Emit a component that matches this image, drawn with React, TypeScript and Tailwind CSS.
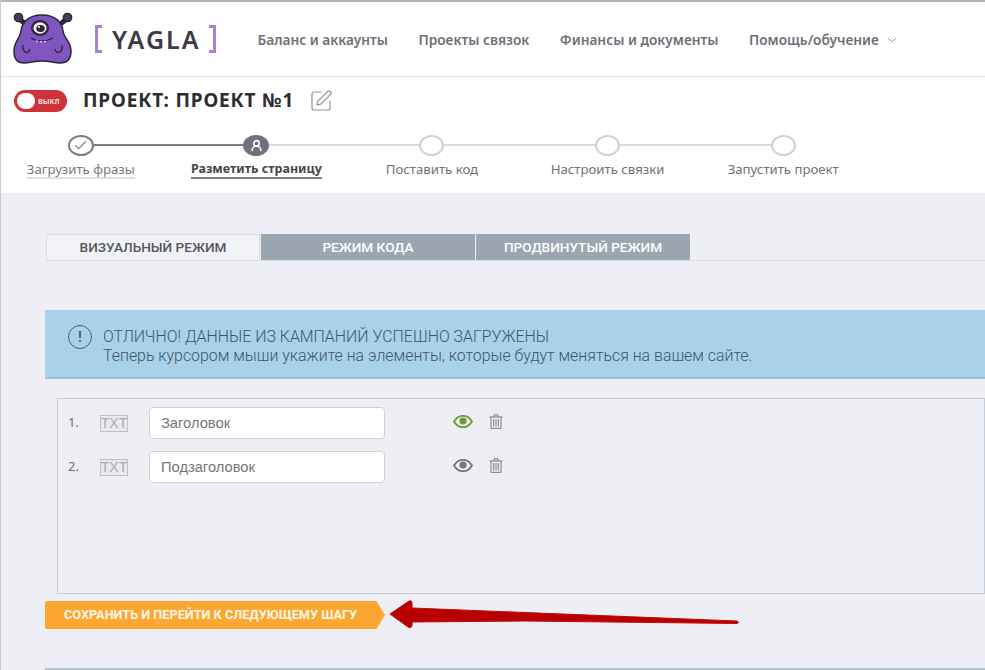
import React from "react";
import { ChevronDown, Check, UserRound, SquarePen } from "lucide-react";

const sans = "font-['Noto_Sans','Open_Sans',sans-serif]";

const steps = [
  { label: "Загрузить фразы", state: "done" },
  { label: "Разметить страницу", state: "active" },
  { label: "Поставить код", state: "todo" },
  { label: "Настроить связки", state: "todo" },
  { label: "Запустить проект", state: "todo" },
];

function Monster() {
  return (
    <svg width="60" height="54" viewBox="0 0 60 54" className="shrink-0">
      <path d="M5 6 L14 13 M55 6 L46 13" stroke="#2b2533" strokeWidth="5" />
      <circle cx="5.5" cy="5.5" r="4.2" fill="#4a3a5c" stroke="#2b2533" strokeWidth="1.3" />
      <circle cx="54.5" cy="5.5" r="4.2" fill="#4a3a5c" stroke="#2b2533" strokeWidth="1.3" />
      <path
        d="M29 3 C16 3 9 10 8 19 C7 27 1 29 1 39 C1 47 5 51 11 51 C17 51 21 49 29 49 C37 49 41 51 47 51 C54 51 58 47 58 39 C58 29 51 27 50 19 C49 10 42 3 29 3 Z"
        fill="#7f55c0"
        stroke="#2b2533"
        strokeWidth="1.5"
      />
      <ellipse cx="27" cy="16" rx="9" ry="8" fill="#2f2838" />
      <ellipse cx="27" cy="16" rx="6.6" ry="5.8" fill="#f4f1f7" />
      <ellipse cx="27.5" cy="16.5" rx="4.2" ry="3.6" fill="#2f2838" />
      <circle cx="26" cy="15" r="1" fill="#fff" />
      <path d="M18 26 C24 30 33 30 40 26" fill="none" stroke="#2b2533" strokeWidth="1.2" />
      <path d="M23 28.5 l1 1.6 l1-1.2 M27 29.2 l1 1.4 l1-1.4 M31 29 l1 1.4 l1-1.6" fill="#e8e2f0" stroke="#e8e2f0" strokeWidth="0.7" />
      <path d="M10 33 C9 41 16 43 17 37 M49 33 C50 41 43 43 42 37" fill="none" stroke="#2b2533" strokeWidth="1.3" />
    </svg>
  );
}

function Eye({ color }: { color: string }) {
  return (
    <svg width="20" height="13" viewBox="0 0 20 13">
      <path d="M1 6.5 C4 1.5 7 0.8 10 0.8 C13 0.8 16 1.5 19 6.5 C16 11.5 13 12.2 10 12.2 C7 12.2 4 11.5 1 6.5 Z" fill="none" stroke={color} strokeWidth="1.8" />
      <circle cx="10" cy="6" r="3.6" fill={color} />
    </svg>
  );
}

function Trash() {
  return (
    <svg width="14" height="15" viewBox="0 0 14 15" fill="none" stroke="#77797f" strokeWidth="1">
      <path d="M0.5 3 H13.5 M5 3 V0.8 H9 V3 M2 3 V14.3 H12 V3 M4.7 5 V12.5 M7 5 V12.5 M9.3 5 V12.5" />
    </svg>
  );
}

function TxtBadge() {
  return (
    <span className="flex h-[17px] w-[28px] items-center justify-center border border-[#bfc1c6] bg-[#e9eaef] font-['Liberation_Sans',sans-serif] text-[14px] leading-none text-[#a9abb1]">
      TXT
    </span>
  );
}

function FieldRow({ n, value, eye }: { n: number; value: string; eye: string }) {
  return (
    <div className="flex h-[32px] items-center">
      <span className={`w-[42px] pl-[10px] text-[13px] text-[#6a6d74] ${sans}`}>{n}.</span>
      <TxtBadge />
      <div className="ml-[21px] flex h-[32px] w-[236px] items-center rounded-[4px] border border-[#cdd2dc] bg-white pl-[11px] font-['Liberation_Sans',sans-serif] text-[14.7px] text-[#74777d]">
        {value}
      </div>
      <span className="ml-[68px] flex -translate-y-[2px] items-center">
        <Eye color={eye} />
      </span>
      <span className="ml-[16px] flex -translate-y-[2px]">
        <Trash />
      </span>
    </div>
  );
}

export default function App() {
  return (
    <div className={`relative h-[670px] w-[985px] overflow-hidden border-l border-[#c9c9c9] bg-[#edeff5] ${sans}`}>
      <div className="h-[2px] bg-[#b4b4b4]" />

      <header className="flex h-[75px] items-center border-b border-[#dfe1e8] bg-white pl-[12px]">
        <Monster />
        <div className="ml-[22px] flex h-[28px] items-center text-[#a981dc]">
          <span className="h-full w-[7px] border-y-[3px] border-l-[3px] border-[#a981dc]" />
          <span className="ml-[10px] text-[25px] font-semibold leading-none tracking-[2px] text-[#3d3a45]">YAGLA</span>
          <span className="ml-[9px] h-full w-[7px] border-y-[3px] border-r-[3px] border-[#a981dc]" />
        </div>
        <nav className="ml-[41px] flex translate-y-[1px] items-center gap-[30.5px] text-[13.7px] font-semibold text-[#6f7178]">
          <span>Баланс и аккаунты</span>
          <span>Проекты связок</span>
          <span>Финансы и документы</span>
          <span className="flex items-center gap-[5px]">
            Помощь/обучение
            <ChevronDown size={16} strokeWidth={1.2} className="text-[#85878d]" />
          </span>
        </nav>
      </header>

      <section className="h-[116px] bg-white">
        <div className="flex h-[47px] items-center pl-[13px]">
          <div className="flex h-[22px] w-[53px] items-center rounded-full bg-[#cf3238] pl-[3px]">
            <span className="h-[16px] w-[18px] rounded-full bg-white" />
            <span className="ml-[3px] text-[8px] font-bold leading-none text-[#f7d8d9]">выкл</span>
          </div>
          <h1 className="ml-[16px] text-[19px] font-bold leading-none tracking-[0.85px] text-[#2d2d33]">ПРОЕКТ: ПРОЕКТ №1</h1>
          <SquarePen size={24} strokeWidth={1.2} className="ml-[15px] text-[#8c9098]" />
        </div>
        <div className="-ml-[8px] flex w-[878px] pt-[11px]">
          {steps.map((s, i) => (
            <div key={s.label} className="relative flex w-[175.6px] flex-col items-center">
              {i < steps.length - 1 && (
                <span className={`absolute left-1/2 top-[9px] h-[2px] w-[175.6px] ${s.state === "done" ? "bg-[#7b7e87]" : "bg-[#d9dbe2]"}`} />
              )}
              {s.state === "done" && (
                <span className="relative z-10 flex h-[21px] w-[26px] items-center justify-center rounded-[50%] border-2 border-[#7b7e87] bg-white">
                  <Check size={15} strokeWidth={1.8} className="text-[#7b7e87]" />
                </span>
              )}
              {s.state === "active" && (
                <span className="relative z-10 flex h-[21px] w-[26px] items-center justify-center rounded-[50%] bg-[#6f727c]">
                  <UserRound size={13} strokeWidth={2.8} className="text-white" />
                </span>
              )}
              {s.state === "todo" && (
                <span className="relative z-10 h-[21px] w-[25px] rounded-[50%] border-2 border-[#cfd1d9] bg-white" />
              )}
              <span
                className={`mt-[5px] border-b-2 leading-[16px] ${
                  s.state === "active"
                    ? "border-[#7b7e87] text-[12.5px] font-bold text-[#44464d]"
                    : s.state === "done"
                      ? "border-[#dfe0e5] text-[13.2px] text-[#77797f]"
                      : "border-transparent text-[13.2px] text-[#6f7178]"
                }`}
              >
                {s.label}
              </span>
            </div>
          ))}
        </div>
      </section>

      <div className="ml-[45px] mt-[41px] flex h-[27px] border-b border-[#d9dce3] font-['Roboto',sans-serif] text-[13.6px] font-medium">
        <div className="flex w-[214px] items-center justify-center border border-b-0 border-[#d9dce3] bg-[#f2f3f7] text-[#55575e]">
          ВИЗУАЛЬНЫЙ РЕЖИМ
        </div>
        <div className="ml-px flex w-[214px] items-center justify-center bg-[#9ba6b1] text-white">РЕЖИМ КОДА</div>
        <div className="ml-px flex w-[214px] items-center justify-center bg-[#9ba6b1] text-white">ПРОДВИНУТЫЙ РЕЖИМ</div>
      </div>

      <div className="ml-[44px] mt-[49px] flex h-[69px] items-start border-b-2 border-[#9dc2da] bg-[#a9d1ea] pl-[23px] pt-[15px] font-['Roboto',sans-serif] text-[15.9px] font-light leading-[19px] text-[#3f5666]">
        <span className="flex h-[24px] w-[24px] items-center justify-center rounded-full border-[1.5px] border-[#3f6478] text-[14px] font-bold leading-none text-[#3f6478]">
          !
        </span>
        <div className="ml-[11px] pt-[2px]">
          <div>ОТЛИЧНО! ДАННЫЕ ИЗ КАМПАНИЙ УСПЕШНО ЗАГРУЖЕНЫ</div>
          <div>Теперь курсором мыши укажите на элементы, которые будут меняться на вашем сайте.</div>
        </div>
      </div>

      <div className="ml-[56px] mt-[19px] flex h-[196px] w-[928px] flex-col gap-[12px] border border-[#c5cbd5] pt-[8px]">
        <FieldRow n={1} value="Заголовок" eye="#6f9a32" />
        <FieldRow n={2} value="Подзаголовок" eye="#74767e" />
      </div>

      <div className="ml-[44px] mt-[7px] flex h-[28px] w-[340px] items-center rounded-l-[2px] bg-[#fba732] pl-[19px] font-['Roboto',sans-serif] text-[12.7px] font-bold text-[#fff7e8] [clip-path:polygon(0_0,97.5%_0,100%_50%,97.5%_100%,0_100%)]">
        СОХРАНИТЬ И ПЕРЕЙТИ К СЛЕДУЮЩЕМУ ШАГУ
      </div>

      <div className="ml-[44px] mt-[39px] h-[2px] bg-[#b8c2cc]" />

      <svg width="360" height="34" viewBox="0 0 360 34" className="absolute left-[384px] top-[598px]">
        <path
          d="M5 16 L24 3 Q27 2 27 5 L27 10 L352 23 Q355 24.5 352 25.5 L140 23 L27 24 L27 28 Q26 31 23 29 Z"
          fill="#b80000"
          stroke="#c40808"
          strokeWidth="1"
          strokeLinejoin="round"
        />
      </svg>
    </div>
  );
}
